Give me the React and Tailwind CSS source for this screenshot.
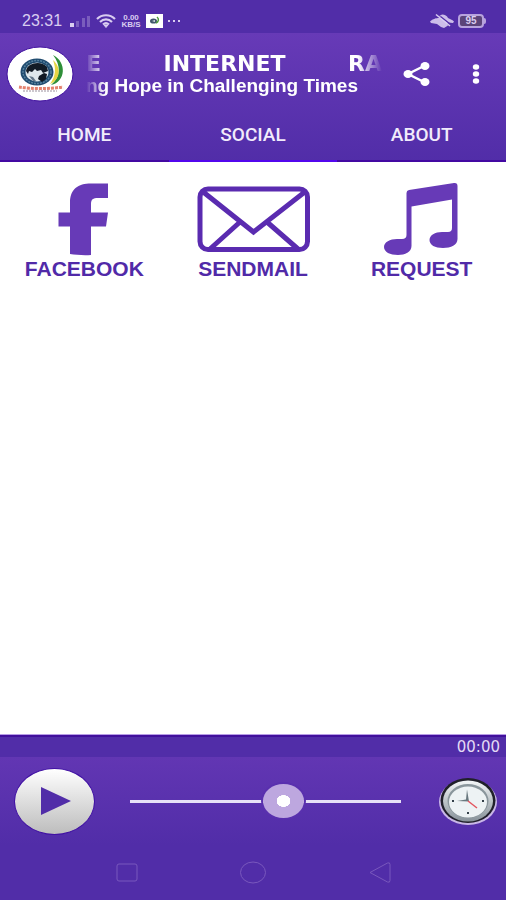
import React, { useState } from "react";

function StatusBar() {
  return (
    <div className="flex h-[33px] shrink-0 items-center justify-between bg-[#512da8] pl-[22px] pr-5 pt-2 text-[#d9cdf0]">
      <div className="flex items-center">
        <span className="w-12 text-base leading-5">23:31</span>
        <svg className="h-4 w-[22px]" viewBox="0 0 22 16" fill="currentColor" aria-hidden="true">
          <rect x="0" y="10" width="4" height="4" />
          <g opacity="0.3">
            <rect x="6" y="8" width="3" height="6" />
            <rect x="12" y="5" width="3" height="9" />
            <rect x="17" y="3" width="3" height="11" />
          </g>
        </svg>
        <svg className="ml-1 h-4 w-5" viewBox="0 0 20 16" fill="none" stroke="currentColor" strokeWidth="2.200" aria-hidden="true">
          <path d="M1 6C6 1 14 1 19 6M4 9c3.500-3.500 8.500-3.500 12 0M7 11.500c2-1.800 4-1.800 6 0" />
          <path d="M8 12h4L10 14.500z" fill="currentColor" strokeWidth="1" />
        </svg>
        <span className="ml-1 flex w-[22px] flex-col text-center text-[8px] font-bold leading-[7px]">
          <span>0.00</span>
          <span>KB/S</span>
        </span>
        <svg className="ml-1 h-[14px] w-[17px]" viewBox="0 0 17 14" aria-hidden="true">
          <rect width="17" height="14" fill="#fff" />
          <ellipse cx="7.500" cy="7" rx="3.500" ry="2.600" fill="#40566c" />
          <path d="M6 7l3-1v2z" fill="#dce5ea" />
          <path d="M11 3c2.500 2 1.500 5-1 6" fill="none" stroke="#4d9b3b" strokeWidth="1.500" />
        </svg>
        <svg className="ml-1 h-2 w-4" viewBox="0 0 16 8" fill="currentColor" aria-hidden="true">
          <rect x="1" y="3" width="2" height="2" />
          <rect x="6" y="3" width="2" height="2" />
          <rect x="11" y="3" width="2" height="2" />
        </svg>
      </div>
      <div className="flex items-center gap-1">
        <svg className="h-4 w-6" viewBox="0 0 24 16" aria-hidden="true">
          <path d="M0 8.500C3 6 4 6 7 5C9 3 10 2.500 12 1.500C15 1.500 17 3 18 5C20 6 22 6.500 24 8.500L23 10L18 9.500L17 11L18 12.500L14 15L11 14L7 11L1 10z" fill="currentColor" opacity="0.9" />
          <path d="M6 4.500L11 4L20 11" fill="none" stroke="#512da8" strokeWidth="1.500" />
          <path d="M6 1.500L20 13" stroke="currentColor" strokeWidth="1.500" />
        </svg>
        <span className="flex h-[14px] items-center">
          <span className="flex h-[14px] w-[26px] items-center justify-center rounded border-2 border-[#b7a3dd] bg-[#5b4479] text-[10px] font-bold leading-none">95</span>
          <span className="h-[6px] w-[2px] rounded-r bg-[#b7a3dd]" />
        </span>
      </div>
    </div>
  );
}

function StationLogo() {
  return (
    <svg className="h-14 w-[68px] shrink-0" viewBox="0 0 68 56" role="img" aria-label="Station logo">
      <ellipse cx="34" cy="28" rx="33" ry="27" fill="#fff" stroke="#4212a0" strokeWidth="1" />
      <path d="M47 9C61 16 60 36 45 39C55 31 55 19 47 9z" fill="#2e8f38" />
      <path d="M47 14C56 22 54 34 44 38C50 30 50 22 47 14z" fill="#e6d544" />
      <ellipse cx="31" cy="26" rx="16.500" ry="13.500" fill="#1f4a6e" />
      <ellipse cx="31" cy="26" rx="14" ry="11.500" fill="none" stroke="#55809c" strokeWidth="1.500" strokeDasharray="2 1" />
      <ellipse cx="31" cy="26" rx="11.500" ry="9.500" fill="#dfe8ec" />
      <path d="M20 25C21 17 35 14 41 21L42 25L37 27L35 24L31 25L29 23L26 26L23 25L22 28z" fill="#121b25" />
      <path d="M33 30l5-3 3 1-1 5-4 3-4-3z" fill="#111922" />
      <path d="M23 30l4 1 3 4-3 0z" fill="#66798a" />
      <path d="M13 41C25 43 43 43 57 41" fill="none" stroke="#e4836f" strokeWidth="3" strokeDasharray="3 1" />
      <path d="M17 45h34" stroke="#9a8f9d" strokeDasharray="2 1" />
    </svg>
  );
}

function Header() {
  return (
    <div className="flex h-[77px] items-center pl-[6px] pr-4 pt-1">
      <StationLogo />
      <div className="ml-3 min-w-0 flex-1 whitespace-nowrap font-bold text-white [mask-image:linear-gradient(to_right,transparent,black_18px,black_calc(100%-24px),transparent)]">
        <h1 className="flex justify-between font-['DejaVu_Sans',sans-serif] text-[22px] leading-6">
          <span>E</span>
          <span>INTERNET</span>
          <span>RA</span>
        </h1>
        <p className="text-[19px] leading-5">ng Hope in Challenging Times</p>
      </div>
      <button type="button" aria-label="Share" className="ml-5">
        <svg className="h-7 w-7" viewBox="0 0 28 28" fill="#fff" aria-hidden="true">
          <path d="M22 6L6 14l16 8" fill="none" stroke="#fff" strokeWidth="2.500" />
          <ellipse cx="23" cy="6" rx="4.500" ry="4" />
          <ellipse cx="6" cy="14" rx="4.500" ry="4" />
          <ellipse cx="23" cy="22" rx="4.500" ry="4" />
        </svg>
      </button>
      <button type="button" aria-label="More options" className="ml-8">
        <svg className="h-7 w-7" viewBox="0 0 28 28" fill="#fff" aria-hidden="true">
          <ellipse cx="14" cy="7" rx="3.200" ry="2.800" />
          <ellipse cx="14" cy="14" rx="3.200" ry="2.800" />
          <ellipse cx="14" cy="21" rx="3.200" ry="2.800" />
        </svg>
      </button>
    </div>
  );
}

function Tabs() {
  const [active, setActive] = useState("SOCIAL");
  return (
    <nav className="grid grid-cols-3">
      {["HOME", "SOCIAL", "ABOUT"].map((tab) => (
        <button
          key={tab}
          type="button"
          onClick={() => setActive(tab)}
          className={`h-[52px] border-b-2 font-['Roboto',sans-serif] text-[19px] font-medium leading-6 text-[#f1ebfb] ${
            active === tab ? "border-[#5207ed]" : "border-[#4309a2]"
          }`}
        >
          {tab}
        </button>
      ))}
    </nav>
  );
}

function FacebookIcon() {
  return (
    <svg className="h-[76px] w-[120px]" viewBox="0 0 120 76" aria-hidden="true">
      <path
        d="M46 31.500V22C46 8 54 2.500 67 2.500H84V17H74C69 17 67 18.500 67 23V31.500H84L82 45.500H67V74C60 74.500 52 74 46 73V45.500H34.500V31.500z"
        fill="#673ab7"
      />
    </svg>
  );
}

function MailIcon() {
  return (
    <svg className="h-[76px] w-[120px]" viewBox="0 0 120 76" fill="none" stroke="#5a2bb0" strokeWidth="5" aria-hidden="true">
      <rect x="7" y="8" width="107.500" height="60.500" rx="8" />
      <path d="M9 10L60.500 51L113 10M17 68L47 41M105 68L74 41" />
    </svg>
  );
}

function MusicIcon() {
  return (
    <svg className="h-[76px] w-[120px]" viewBox="0 0 120 76" aria-hidden="true">
      <path
        d="M44.500 12Q44.500 9.500 47 9L92 2Q95.500 1.500 95.500 5V58C95.500 64 89 67 81 67C73 67 67.500 64 67.500 59C67.500 54 73 51 80 51H86Q90 51 90 47V18.500L49.500 25.500V65C49.500 71 43 74 36 74C28 74 22 71 22 66C22 61 28 58 35 58H40Q44.500 58 44.500 54z"
        fill="#673ab7"
      />
    </svg>
  );
}

const links = [
  { label: "FACEBOOK", Icon: FacebookIcon },
  { label: "SENDMAIL", Icon: MailIcon },
  { label: "REQUEST", Icon: MusicIcon },
];

function ClockIcon() {
  return (
    <svg className="h-[50px] w-[60px]" viewBox="0 0 60 50" aria-hidden="true">
      <defs>
        <linearGradient id="rim" x2="0" y2="1">
          <stop stopColor="#f4f7f8" />
          <stop offset="1" stopColor="#879199" />
        </linearGradient>
      </defs>
      <ellipse cx="30" cy="26" rx="29" ry="23" fill="#c9b7e7" />
      <ellipse cx="30" cy="24.500" rx="27.500" ry="22.500" fill="#20202a" />
      <ellipse cx="30" cy="25" rx="25" ry="20.500" fill="url(#rim)" />
      <ellipse cx="30" cy="25" rx="20.500" ry="17" fill="#8a969c" />
      <ellipse cx="30" cy="26" rx="19" ry="15.500" fill="#edf2f4" />
      <path d="M29 13.500l2 12-12-.5 9-1.500z" fill="#68777e" />
      <path d="M30 25l9 7" stroke="#e2555f" strokeWidth="1.500" />
      <path d="M14 24h2v2h-2zM44 24h2v2h-2zM29 36h2v2h-2z" fill="#34404a" />
    </svg>
  );
}

function Player() {
  const [volume, setVolume] = useState(58);
  return (
    <footer className="shrink-0 border-t border-[#b79ce6] bg-[#512da8]">
      <div className="flex h-[22px] items-center justify-end border-t-2 border-[#41109c] pr-[6px]">
        <time className="font-['DejaVu_Sans',sans-serif] text-[15px] leading-4 text-[#e4daf5]">00:00</time>
      </div>
      <div className="flex h-[88px] items-center bg-linear-to-b from-[#6236b3] to-[#512da8] pl-[14px] pr-2">
        <button
          type="button"
          aria-label="Play"
          className="flex h-[67px] w-[81px] shrink-0 items-center justify-center rounded-[50%] border border-[#4111a4] bg-linear-to-b from-white to-[#bdbdbd]"
        >
          <svg className="h-[30px] w-[32px]" viewBox="0 0 32 30" aria-hidden="true">
            <path d="M2 1L32 15L2 29z" fill="#512da8" />
          </svg>
        </button>
        <input
          type="range"
          aria-label="Volume"
          value={volume}
          onChange={(e) => setVolume(Number(e.target.value))}
          className="ml-[35px] mr-[37px] h-9 min-w-0 flex-1 appearance-none bg-transparent [&::-webkit-slider-runnable-track]:h-[3px] [&::-webkit-slider-runnable-track]:bg-[#e7e1f7] [&::-webkit-slider-thumb]:mt-[-16px] [&::-webkit-slider-thumb]:h-[34px] [&::-webkit-slider-thumb]:w-[41px] [&::-webkit-slider-thumb]:appearance-none [&::-webkit-slider-thumb]:rounded-[50%] [&::-webkit-slider-thumb]:bg-[radial-gradient(ellipse_7px_6px_at_center,white_95%,#bda7df_100%)] [&::-webkit-slider-thumb]:shadow-[0_0_0_2px_#5930ae]"
        />
        <button type="button" aria-label="Sleep timer" className="shrink-0">
          <ClockIcon />
        </button>
      </div>
      <div className="grid h-[55px] grid-cols-4 pb-[2px]">
        <button type="button" aria-label="Recent apps" className="col-start-1 flex items-center justify-end">
          <svg className="mr-[-12px] h-6 w-6" viewBox="0 0 24 24" fill="none" stroke="#7958bd" aria-hidden="true">
            <rect x="2" y="4" width="20" height="17" rx="2" />
          </svg>
        </button>
        <button type="button" aria-label="Home screen" className="col-span-2 flex items-center justify-center">
          <svg className="h-6 w-7" viewBox="0 0 28 24" fill="none" stroke="#7958bd" aria-hidden="true">
            <ellipse cx="14" cy="12.500" rx="12.500" ry="10.500" />
          </svg>
        </button>
        <button type="button" aria-label="Back" className="flex items-center justify-start">
          <svg className="ml-[-12px] h-6 w-6" viewBox="0 0 24 24" fill="none" stroke="#7958bd" strokeLinejoin="round" aria-hidden="true">
            <path d="M2 12.500L19.500 3Q22 2 22 4.500V20.500Q22 23 19.500 22z" />
          </svg>
        </button>
      </div>
    </footer>
  );
}

export default function App() {
  return (
    <div className="flex min-h-screen flex-col bg-white font-['Liberation_Sans',Arial,sans-serif]">
      <StatusBar />
      <header className="shrink-0 bg-linear-to-b from-[#673ab7] to-[#512da8]">
        <Header />
        <Tabs />
      </header>
      <main className="flex-1 bg-white pt-[19px]">
        <div className="grid grid-cols-3">
          {links.map(({ label, Icon }) => (
            <a key={label} href={`#${label.toLowerCase()}`} className="flex flex-col items-center">
              <Icon />
              <span className="text-[21px] font-bold leading-6 text-[#512aa8]">{label}</span>
            </a>
          ))}
        </div>
      </main>
      <Player />
    </div>
  );
}
